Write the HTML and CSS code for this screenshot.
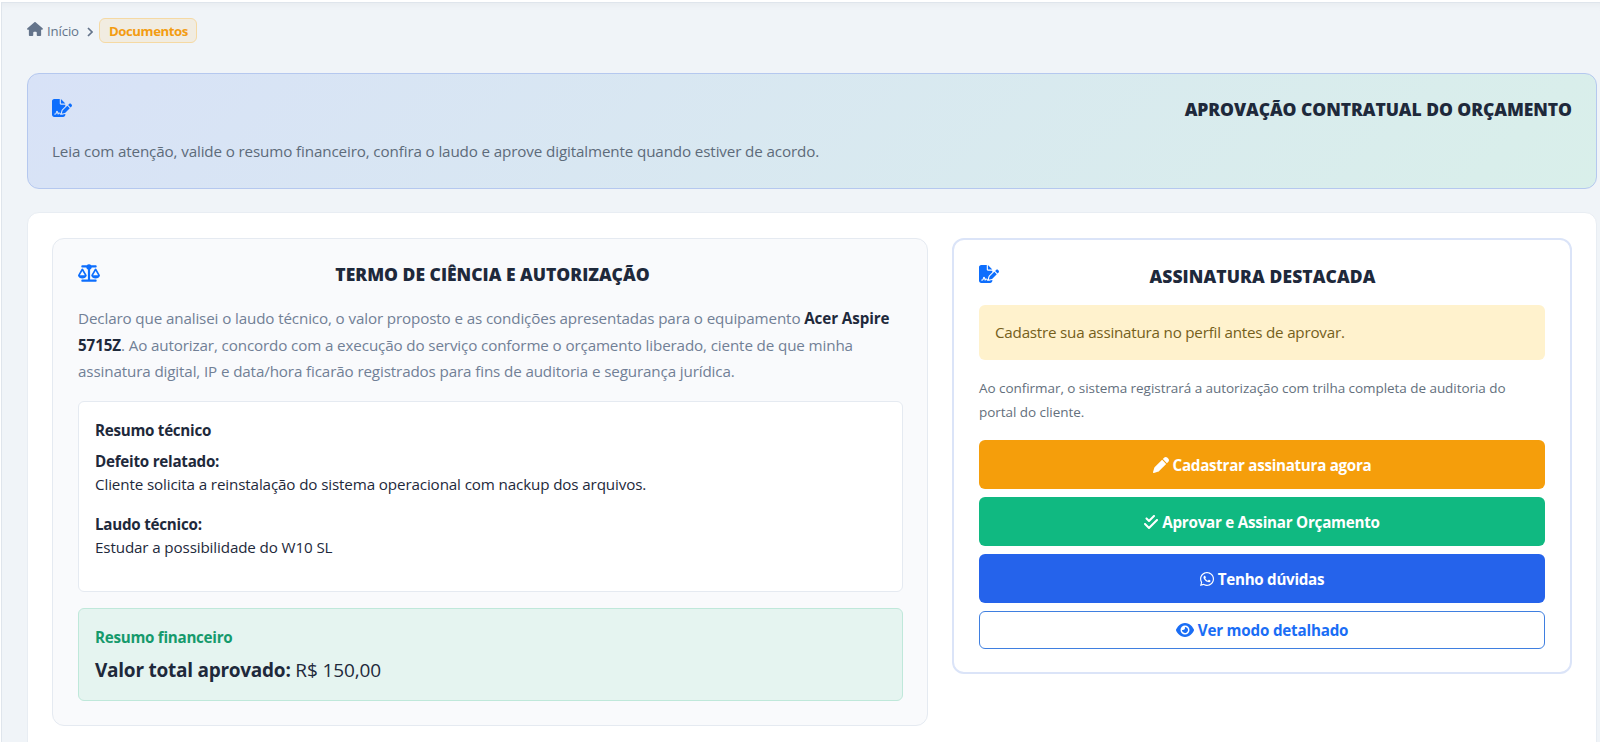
FILE: index.html
```html
<!DOCTYPE html>
<html lang="pt-BR">
<head>
    <meta charset="UTF-8">
    <meta name="viewport" content="width=device-width, initial-scale=1.0">
    <title>Aprovação Contratual do Orçamento</title>
    <link rel="stylesheet" href="styles.css">
</head>
<body>
    <svg class="sprite" aria-hidden="true">
        <symbol id="i-signature" viewBox="0 0 576 512"><path d="M64 0C28.7 0 0 28.7 0 64V448c0 35.3 28.7 64 64 64H320c35.3 0 64-28.7 64-64V428.7c-2.7 1.1-5.4 2-8.2 2.7l-60.1 15c-3 .7-6 1.2-9 1.4c-.9 .1-1.8 .2-2.7 .2H240c-6.1 0-11.6-3.4-14.3-8.8l-8.8-17.7c-1.7-3.4-5.1-5.5-8.8-5.5s-7.2 2.1-8.8 5.5l-8.8 17.7c-2.9 5.9-9.2 9.4-15.7 8.8s-12.1-5.1-13.9-11.3L144 381l-9.8 32.8c-6.1 20.3-24.8 34.2-46 34.2H80c-8.8 0-16-7.2-16-16s7.2-16 16-16h8.2c7.1 0 13.3-4.6 15.3-11.4l14.9-49.5c3.4-11.3 13.8-19.1 25.6-19.1s22.2 7.7 25.6 19.1l11.6 38.6c7.4-6.2 16.8-9.7 26.8-9.7c15.9 0 30.4 9 37.5 23.2l4.4 8.8h8.9c-3.1-8.8-3.7-18.4-1.4-27.8l15-60.1c2.8-11.3 8.6-21.5 16.8-29.7L384 203.6V160H256c-17.7 0-32-14.3-32-32V0H64zM256 0V128H384L256 0zM549.8 139.7c-15.6-15.6-40.9-15.6-56.6 0l-29.4 29.4 71 71 29.4-29.4c15.6-15.6 15.6-40.9 0-56.6l-14.4-14.4zM311.9 321c-4.1 4.1-7 9.2-8.4 14.9l-15 60.1c-1.4 5.5 .2 11.2 4.2 15.2s9.7 5.6 15.2 4.2l60.1-15c5.6-1.4 10.8-4.3 14.9-8.4L512.1 262.7l-71-71L311.9 321z"/></symbol>
    </svg>

    <div class="content">
        <nav class="breadcrumb">
            <a class="crumb" href="#">
                <svg class="icon-home" viewBox="0 0 576 512"><path d="M575.8 255.5c0 18-15 32.1-32 32.1h-32l.7 160.2c0 2.7-.2 5.4-.5 8.1V472c0 22.1-17.9 40-40 40H456c-1.1 0-2.2 0-3.3-.1c-1.4 .1-2.8 .1-4.2 .1H416 392c-22.1 0-40-17.9-40-40V448 384c0-17.7-14.3-32-32-32H256c-17.7 0-32 14.3-32 32v64 24c0 22.1-17.9 40-40 40H160 128.1c-1.5 0-3-.1-4.5-.2c-1.2 .1-2.4 .2-3.6 .2H104c-22.1 0-40-17.9-40-40V360c0-.9 0-1.9 .1-2.8V287.6H32c-18 0-32-14-32-32.1c0-9 3-17 10-24L266.4 8c7-7 15-8 22-8s15 2 21 7L564.8 231.5c8 7 12 15 11 24z"/></svg>
                <span>Início</span>
            </a>
            <svg class="icon-chevron" viewBox="0 0 6 10"><path d="M1 1l4 4-4 4"/></svg>
            <span class="crumb-active">Documentos</span>
        </nav>

        <header class="hero">
            <div class="hero-top">
                <svg class="icon-title"><use href="#i-signature"/></svg>
                <h1 class="title hero-title">APROVAÇÃO CONTRATUAL DO ORÇAMENTO</h1>
            </div>
            <p class="hero-text">Leia com atenção, valide o resumo financeiro, confira o laudo e aprove digitalmente quando estiver de acordo.</p>
        </header>

        <main class="panel">
            <section class="card term">
                <div class="card-head">
                    <svg class="icon-scale" viewBox="0 0 640 512"><path d="M384 32H512c17.7 0 32 14.3 32 32s-14.3 32-32 32H398.4c-5.2 25.8-22.9 47.1-46.4 57.3V448H512c17.7 0 32 14.3 32 32s-14.3 32-32 32H320 128c-17.7 0-32-14.3-32-32s14.3-32 32-32H288V153.3c-23.5-10.3-41.2-31.6-46.4-57.3H128c-17.7 0-32-14.3-32-32s14.3-32 32-32H256c14.6-19.4 37.8-32 64-32s49.4 12.6 64 32zm55.6 288H584.4L512 195.8 439.6 320zM512 416c-62.9 0-115.2-34-126-78.9c-2.6-11 1-22.3 6.7-32.1l95.2-163.2c5-8.6 14.2-13.8 24.1-13.8s19.1 5.3 24.1 13.8l95.2 163.2c5.7 9.8 9.3 21.1 6.7 32.1C627.2 382 574.9 416 512 416zM126.8 195.8L54.4 320H199.3L126.8 195.8zM.9 337.1c-2.6-11 1-22.3 6.7-32.1l95.2-163.2c5-8.6 14.2-13.8 24.1-13.8s19.1 5.3 24.1 13.8l95.2 163.2c5.7 9.8 9.3 21.1 6.7 32.1C242 382 189.7 416 126.8 416S11.7 382 .9 337.1z"/></svg>
                    <h2 class="title term-title">TERMO DE CIÊNCIA E AUTORIZAÇÃO</h2>
                </div>
                <p class="term-text">Declaro que analisei o laudo técnico, o valor proposto e as condições apresentadas para o equipamento <strong>Acer Aspire 5715Z</strong>. Ao autorizar, concordo com a execução do serviço conforme o orçamento liberado, ciente de que minha assinatura digital, IP e data/hora ficarão registrados para fins de auditoria e segurança jurídica.</p>

                <div class="box tech">
                    <h3 class="box-title">Resumo técnico</h3>
                    <p><strong>Defeito relatado:</strong><br>Cliente solicita a reinstalação do sistema operacional com nackup dos arquivos.</p>
                    <p><strong>Laudo técnico:</strong><br>Estudar a possibilidade do W10 SL</p>
                </div>

                <div class="box finance">
                    <h3 class="box-title">Resumo financeiro</h3>
                    <p class="total"><strong>Valor total aprovado:</strong> R$ 150,00</p>
                </div>
            </section>

            <aside class="card sign">
                <div class="card-head">
                    <svg class="icon-title"><use href="#i-signature"/></svg>
                    <h2 class="title sign-title">ASSINATURA DESTACADA</h2>
                </div>
                <div class="alert">Cadastre sua assinatura no perfil antes de aprovar.</div>
                <p class="sign-text">Ao confirmar, o sistema registrará a autorização com trilha completa de auditoria do portal do cliente.</p>
                <div class="actions">
                    <a class="btn btn-warning" href="#">
                        <svg class="icon-pen" viewBox="0 0 512 512"><path d="M362.7 19.3L314.3 67.7 444.3 197.7l48.4-48.4c25-25 25-65.5 0-90.5L453.3 19.3c-25-25-65.5-25-90.5 0zm-71 71L58.6 323.5c-10.4 10.4-18 23.3-22.2 37.4L1 481.2C-1.5 489.7 .8 498.8 7 505s15.3 8.5 23.7 6.1l120.3-35.4c14.1-4.2 27-11.8 37.4-22.2L421.7 220.3 291.7 90.3z"/></svg>
                        <span>Cadastrar assinatura agora</span>
                    </a>
                    <a class="btn btn-success" href="#">
                        <svg class="icon-check" viewBox="0 0 448 512"><path d="M342.6 86.6c12.5-12.5 12.5-32.8 0-45.3s-32.8-12.5-45.3 0L160 178.7l-57.4-57.4c-12.5-12.5-32.8-12.5-45.3 0s-12.5 32.8 0 45.3l80 80c12.5 12.5 32.8 12.5 45.3 0l160-160zm96 128c12.5-12.5 12.5-32.8 0-45.3s-32.8-12.5-45.3 0L160 402.7 54.6 297.4c-12.5-12.5-32.8-12.5-45.3 0s-12.5 32.8 0 45.3l128 128c12.5 12.5 32.8 12.5 45.3 0l256-256z"/></svg>
                        <span>Aprovar e Assinar Orçamento</span>
                    </a>
                    <a class="btn btn-primary" href="#">
                        <svg class="icon-whats" viewBox="0 0 448 512"><path d="M380.9 97.1C339 55.1 283.2 32 223.9 32c-122.4 0-222 99.6-222 222 0 39.1 10.2 77.3 29.6 111L0 480l117.7-30.9c32.4 17.7 68.9 27 106.1 27h.1c122.3 0 224.1-99.6 224.1-222 0-59.3-25.2-115-67.1-157zm-157 341.6c-33.2 0-65.7-8.9-94-25.7l-6.7-4-69.8 18.3L72 359.2l-4.4-7c-18.5-29.4-28.2-63.3-28.2-98.2 0-101.7 82.8-184.5 184.6-184.5 49.3 0 95.6 19.2 130.4 54.1 34.8 34.9 56.2 81.2 56.1 130.5 0 101.8-84.9 184.6-186.6 184.6zm101.2-138.2c-5.5-2.8-32.8-16.2-37.9-18-5.1-1.9-8.8-2.8-12.5 2.8-3.7 5.6-14.3 18-17.6 21.8-3.2 3.7-6.5 4.2-12 1.4-32.6-16.3-54-29.1-75.5-66-5.7-9.8 5.7-9.1 16.3-30.3 1.8-3.7.9-6.9-.5-9.7-1.4-2.8-12.5-30.1-17.1-41.2-4.5-10.8-9.1-9.3-12.5-9.5-3.2-.2-6.9-.2-10.6-.2-3.7 0-9.7 1.4-14.8 6.9-5.1 5.6-19.4 19-19.4 46.3 0 27.3 19.9 53.7 22.6 57.4 2.8 3.7 39.1 59.7 94.8 83.8 35.2 15.2 49 16.5 66.6 13.9 10.7-1.6 32.8-13.4 37.4-26.4 4.6-13 4.6-24.1 3.2-26.4-1.3-2.5-5-3.9-10.5-6.6z"/></svg>
                        <span>Tenho dúvidas</span>
                    </a>
                    <a class="btn btn-outline" href="#">
                        <svg class="icon-eye" viewBox="0 0 576 512"><path d="M288 32c-80.8 0-145.5 36.8-192.6 80.6C48.6 156 17.3 208 2.5 243.7c-3.3 7.9-3.3 16.7 0 24.6C17.3 304 48.6 356 95.4 399.4C142.5 443.2 207.2 480 288 480s145.5-36.8 192.6-80.6c46.8-43.5 78.1-95.4 93-131.1c3.3-7.9 3.3-16.7 0-24.6c-14.9-35.7-46.2-87.7-93-131.1C433.5 68.8 368.8 32 288 32zM144 256a144 144 0 1 1 288 0 144 144 0 1 1 -288 0zm144-64c0 35.3-28.7 64-64 64c-7.1 0-13.9-1.2-20.3-3.3c-5.5-1.8-11.9 1.6-11.7 7.4c.3 6.9 1.3 13.8 3.2 20.7c13.7 51.2 66.4 81.6 117.6 67.9s81.6-66.4 67.9-117.6c-11.1-41.5-47.8-69.4-88.6-71.1c-5.8-.2-9.2 6.1-7.4 11.7c2.1 6.4 3.3 13.2 3.3 20.3z"/></svg>
                        <span>Ver modo detalhado</span>
                    </a>
                </div>
            </aside>
        </main>
    </div>
</body>
</html>
```
FILE: styles.css
```css
* {
    box-sizing: border-box;
}

body {
    margin: 0;
    padding-top: 2px;
    height: 742px;
    overflow: hidden;
    background: #fff;
    color: #1e293b;
    font-family: "Segoe UI", "Open Sans", "Noto Sans", sans-serif;
    font-size: 15.2px;
    line-height: 24px;
    letter-spacing: -0.13px;
}

h1, h2, h3, p {
    margin: 0;
}

a {
    color: inherit;
    text-decoration: none;
}

svg {
    display: block;
    flex: none;
    fill: currentColor;
}

strong {
    font-weight: 700;
    letter-spacing: -0.25px;
}

.sprite {
    display: none;
}

/* Page area, framed by the topbar and sidebar edges */
.content {
    height: 740px;
    margin-left: 1px;
    padding: 15px 3px 0 25px;
    border-top: 1px solid #dfe5ec;
    border-left: 1px solid #dfe5ec;
    background: #f0f4f8;
    box-shadow: inset 0 8px 10px -8px rgba(15, 23, 42, 0.06);
    overflow: hidden;
}

/* Breadcrumb */
.breadcrumb {
    display: flex;
    align-items: center;
    height: 25px;
    margin-bottom: 30px;
    font-size: 13.2px;
    color: #64748b;
}

.crumb {
    display: flex;
    align-items: center;
    padding-top: 1px;
}

.icon-home {
    width: 16px;
    height: 14px;
    margin: -4px 4px 0 0;
}

.icon-chevron {
    width: 6px;
    height: 10px;
    margin: 2px 6px 0 8px;
    fill: none;
    stroke: currentColor;
    stroke-width: 1.7;
}

.crumb-active {
    height: 25px;
    padding: 0 8px 0 9px;
    border: 1px solid #f5d9a3;
    border-radius: 6px;
    background: #f1ece1;
    color: #f39c12;
    font-weight: 700;
    line-height: 25px;
    letter-spacing: -0.42px;
}

/* Hero */
.hero {
    height: 116px;
    margin-bottom: 23px;
    padding: 24px;
    border: 1px solid #b5c8ef;
    border-radius: 12px;
    background: linear-gradient(135deg, #d8e2f7, #d9efea);
}

.hero-top {
    display: flex;
    justify-content: space-between;
    height: 41px;
}

.title {
    font-size: 17.5px;
    font-weight: 800;
    line-height: 22px;
    letter-spacing: 0;
    white-space: nowrap;
}

.hero-title {
    letter-spacing: -0.06px;
}

.sign-title {
    letter-spacing: 0.1px;
}

.icon-title {
    width: 20px;
    height: 18px;
    margin-top: 1px;
    color: #0d6efd;
}

.sign .icon-title {
    margin-top: 0;
}

.hero-text {
    color: #5d6b7a;
}

/* Main panel */
.panel {
    display: grid;
    grid-template-columns: 876px 620px;
    gap: 24px;
    align-items: start;
    height: 700px;
    padding: 25px 24px;
    border: 1px solid #e8edf3;
    border-radius: 12px;
    background: #fff;
}

.card {
    border-radius: 12px;
}

.card-head {
    display: grid;
    align-items: start;
    text-align: center;
}

.term {
    height: 488px;
    padding: 24px 24px 24px 25px;
    border: 1px solid #e5eaf1;
    background: #f9fafc;
}

.term .card-head {
    grid-template-columns: 22px 1fr 18px;
    height: 42px;
}

.icon-scale {
    width: 22px;
    height: 18px;
    margin-top: 1px;
    color: #0d6efd;
}

.term-text {
    margin-bottom: 16px;
    color: #718096;
    line-height: 26.5px;
}

.term-text strong {
    color: #1e293b;
    letter-spacing: -0.1px;
}

.box {
    padding: 16px;
    border: 1px solid #e5eaf1;
    border-radius: 6px;
}

.box-title {
    margin-bottom: 8px;
    font-size: 15.2px;
    font-weight: 700;
    line-height: 24px;
    letter-spacing: -0.28px;
}

.tech {
    height: 191px;
    margin-bottom: 16px;
    background: #fff;
}

.tech p {
    margin-bottom: 16px;
    line-height: 23.6px;
}

.finance {
    height: 93px;
    border-color: #bfe8da;
    background: #e5f4f0;
}

.finance .box-title {
    color: #159a6c;
}

.total {
    font-size: 19px;
    line-height: 26px;
}

/* Signature card */
.sign {
    height: 436px;
    padding: 25px;
    border: 2px solid #dbe4f8;
}

.sign .card-head {
    grid-template-columns: 20px 1fr 19px;
    height: 40px;
}

.alert {
    height: 55px;
    margin-bottom: 17px;
    padding: 0 16px;
    border-radius: 6px;
    background: #fff2cd;
    color: #75601b;
    line-height: 55px;
    letter-spacing: -0.22px;
}

.sign-text {
    margin-bottom: 15px;
    color: #64707d;
    font-size: 13.5px;
    line-height: 23.8px;
    letter-spacing: -0.05px;
}

.actions {
    display: flex;
    flex-direction: column;
    gap: 8px;
}

.btn {
    display: flex;
    align-items: center;
    justify-content: center;
    gap: 4px;
    height: 49px;
    padding-top: 1px;
    border-radius: 6px;
    color: #fff;
    font-weight: 700;
    letter-spacing: -0.3px;
}

.btn-warning {
    background: #f59e0b;
}

.btn-success {
    background: #10b981;
    letter-spacing: -0.24px;
}

.btn-primary {
    background: #2563eb;
}

.btn-outline {
    height: 38px;
    padding-top: 0;
    border: 1px solid #3f7fe0;
    color: #1a6df5;
    letter-spacing: -0.2px;
}

.icon-pen {
    width: 16px;
    height: 16px;
}

.icon-check,
.icon-whats {
    width: 14px;
    height: 16px;
}

.icon-eye {
    width: 18px;
    height: 16px;
}
```
